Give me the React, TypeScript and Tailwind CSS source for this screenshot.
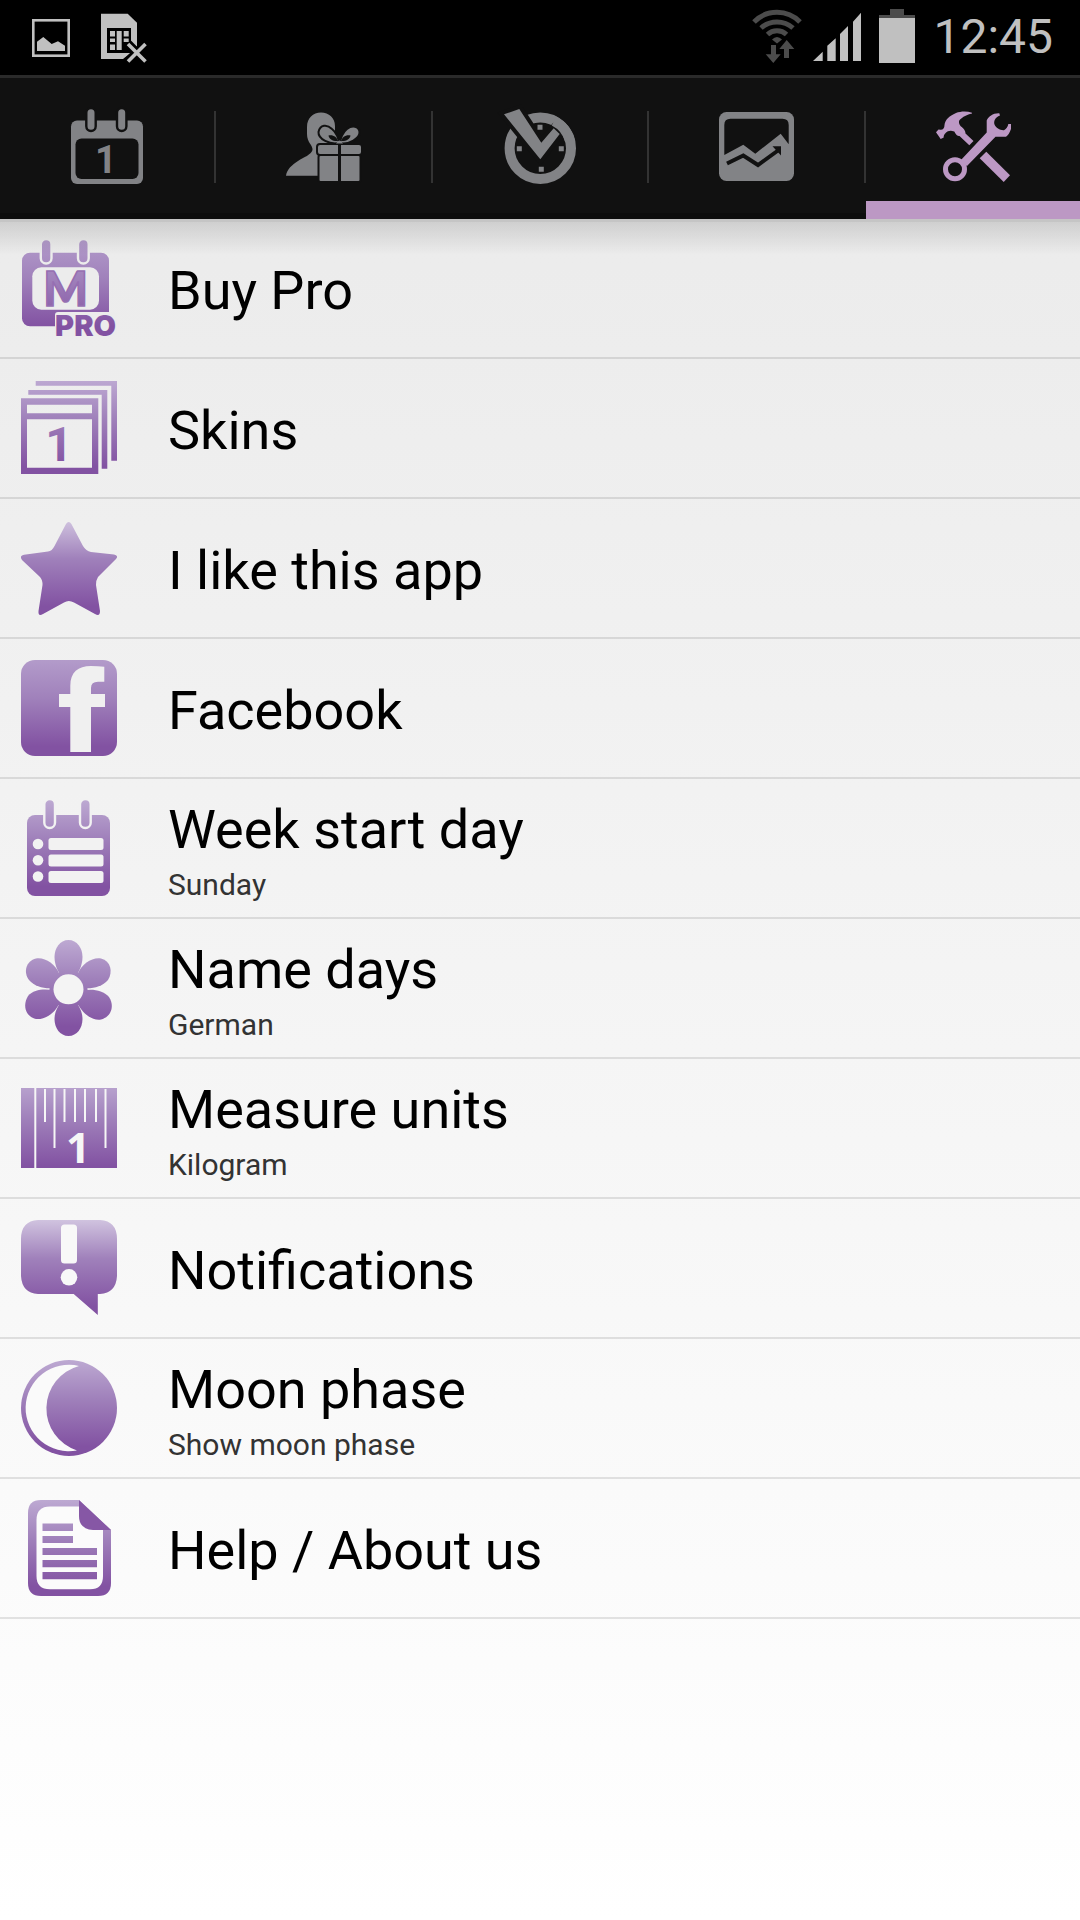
import React from 'react';

interface IconProps {
  children: React.ReactNode;
}

interface SettingsItem {
  title: string;
  summary?: string;
  icon: React.ReactNode;
  // the icon cut-outs use currentColor, so this follows the page background
  tone: string;
  // lightest colour of the icon gradient
  top?: string;
}

const TabIcon: React.FC<IconProps> = ({ children }) => (
  <svg viewBox="0 0 96 96" className="size-24" fill="currentColor" aria-hidden="true">
    {children}
  </svg>
);

const CalendarIcon = () => (
  <TabIcon>
    <rect x="12" y="21.5" width="72" height="63.5" rx="6" />
    <rect x="16.5" y="39.5" width="63" height="40.5" rx="6" fill="#111" />
    <g stroke="#111" strokeWidth="2.4">
      <rect x="27.3" y="9" width="9.4" height="23" rx="4.7" />
      <rect x="58" y="9" width="9.4" height="23" rx="4.7" />
    </g>
    <text x="47" y="74" fontSize="38" fontWeight="700" fontFamily="Roboto, sans-serif" textAnchor="middle">1</text>
  </TabIcon>
);

const GiftIcon = () => (
  <TabIcon>
    <path d="M10 76.7C11 70 16 66 22 62C28 58 35 56 36.5 51C37 46 31 44 31 35V28C31 19 37 13.5 45 13.5C53 13.5 59 19 59 27V50L43 60V76.7Z" />
    <g stroke="#111" strokeWidth="2">
      <path d="M63 44C54 46 42 40 42.5 33C44 25.5 51 25 56 30C60 33 63 40 63 44Z" />
      <path d="M64 44C73 46 84 39 83.5 33C83 27 76 26 71 30C67 33 64 40 64 44Z" />
      <rect x="41" y="45" width="45" height="11" rx="3" />
      <rect x="42.5" y="56" width="42" height="27" rx="2" />
    </g>
    <path d="M62 42C57 42.5 53 40 52.5 36.5C57 35.5 61 38 62 42Z" fill="#111" />
    <path d="M65 42C70 42.5 74 40 74.5 36.5C70 35.5 66 38 65 42Z" fill="#111" />
    <rect x="62" y="46" width="3" height="36" fill="#111" />
    <path d="M60 44.5Q63.5 38.5 67 44.5Z" />
  </TabIcon>
);

const ClockIcon = () => (
  <TabIcon>
    <circle cx="48.3" cy="49.3" r="30.7" fill="none" stroke="currentColor" strokeWidth="10" />
    <path d="M12 15.3L27.3 10L49.3 43.7L61.7 29.3L67.7 35L48.3 60.3Z" stroke="#111" strokeWidth="8" fill="#111" />
    <path d="M62 22A30.7 30.7 0 0 1 78 42" stroke="currentColor" strokeWidth="10" fill="none" />
    <path d="M12 15.3L27.3 10L49.3 43.7L61.7 29.3L67.7 35L48.3 60.3Z" />
    <path d="M45.5 25.8h5v5h-5zM24.8 47.2h5v5h-5zM66.8 47.2h5v5h-5zM46.8 67.8h5v5h-5z" />
  </TabIcon>
);

const ChartIcon = () => (
  <TabIcon>
    <rect x="11" y="13" width="75" height="69" rx="7.5" />
    <path d="M16.3 56V26Q16.3 19.7 22.5 19.7H74.5Q80.7 19.7 80.7 26V45.3L72.7 34.7L47.3 54.7L35.3 45.7Z" fill="#111" />
    <path d="M19 64.5L35.3 56.5L50 66L70 51.5" fill="none" stroke="#111" strokeWidth="4" />
    <path d="M64.5 47.3H73V56.5Z" fill="#111" />
  </TabIcon>
);

const ToolsIcon = () => (
  <TabIcon>
    <path d="M47 13.7C42 12 36 12 31 14C24 17 20 21 19.5 26C19.5 29 18 31 15.5 30.8L13.5 30.5L11 33.3L15.7 40L18.7 38.5C18.5 35 22 31.5 26 31.7L29.3 32.5C31 36 33 37.5 34.5 37L44.3 46.3L48.5 42L40.5 34.5C40.5 31 38 29 36 27.5C33 24 33.5 21 36.3 19.5C39 17 43 15.5 47 14.5Z" />
    <path d="M61.3 52.7L85 76.3L78.7 83L54.7 59.2Z" />
    <circle cx="30" cy="70.3" r="9.5" fill="none" stroke="currentColor" strokeWidth="5" />
    <path d="M35.5 61.5L61.7 33.5V21.5C63.5 17.5 68 14 74.3 14.3L75 16.5C70 18.5 68.5 22 69.5 25.5C71 29 75 31.5 79 31.2C81.5 30 83 27.5 83.3 25H86V30C84.5 34 83 36.5 81 37.7H70.5L42 67Z" />
  </TabIcon>
);

const SettingIcon: React.FC<IconProps & { id: string; tone: string; top?: string }> = ({
  id,
  tone,
  top = '#bda9d2',
  children
}) => (
  <svg viewBox="0 0 96 96" className={`size-24 shrink-0 overflow-visible ${tone}`} fill={`url(#${id})`} aria-hidden="true">
    <defs>
      <linearGradient id={id} gradientUnits="userSpaceOnUse" x1="0" y1="0" x2="0" y2="96">
        <stop offset="0" stopColor={top} />
        <stop offset="0.4" stopColor="#a081bb" />
        <stop offset="0.9" stopColor="#8252a2" />
      </linearGradient>
    </defs>
    {children}
  </svg>
);

const items: SettingsItem[] = [
  {
    title: 'Buy Pro',
    tone: 'text-[#ececec]',
    top: '#b39bca',
    icon: (
      <>
        <rect x="1" y="12.7" width="87" height="73.6" rx="8" />
        <rect x="11.3" y="27.3" width="66.7" height="42.4" rx="9" fill="currentColor" />
        <g stroke="currentColor" strokeWidth="2.4">
          <rect x="19.8" y="-1" width="10.7" height="24.5" rx="5.3" />
          <rect x="57" y="-1" width="10.7" height="24.5" rx="5.3" />
        </g>
        <text x="44.5" y="65.5" fontSize="47" fontWeight="900" fontFamily="Lato, sans-serif" textAnchor="middle" stroke="#966fb2" strokeWidth="1.6">M</text>
        <rect x="34" y="72" width="62" height="24" rx="3" fill="currentColor" />
        <text x="95" y="95.5" fontSize="29" fontWeight="900" fontFamily="Inter, sans-serif" textAnchor="end">PRO</text>
      </>
    )
  },
  {
    title: 'Skins',
    tone: 'text-[#ededed]',
    icon: (
      <>
        <path d="M14.7 1H96V80.7H90.3V5.7H14.7Z" />
        <path d="M7.3 10H86.3V88.7H80.7V14.7H7.3Z" />
        <path fillRule="evenodd" d="M0 18.3H77.3V94H0ZM6 24.7V33.3H71V24.7ZM6 39.3V87.7H71V39.3Z" />
        <text x="38" y="81" fontSize="48" fontWeight="700" fontFamily="Roboto, sans-serif" textAnchor="middle">1</text>
      </>
    )
  },
  {
    title: 'I like this app',
    tone: 'text-[#eeeeee]',
    top: '#d0c3df',
    icon: (
      <path d="M45 4Q47.7 0 50.4 4L62 26Q65 31 70 32L93 34.5Q98 35.5 95 39L77 57Q75 60 75 65L79 91Q79 97 74 94L53 82.5Q47.7 79.5 43 82.5L22 94Q17 97 17.5 91L21.5 65Q21.7 60 19 57L1 40Q-2 35.5 3 34.7L27 31.5Q31 31 33.5 26Z" />
    )
  },
  {
    title: 'Facebook',
    tone: 'text-[#f0f0f0]',
    top: '#b39bca',
    icon: (
      <>
        <rect width="96" height="96" rx="14" />
        <path fill="currentColor" d="M49.3 92V47H38V34H49.3V26C49.3 12 57 6 70 6Q77 6 83.3 6.7V21.7H77Q70 21.7 70 28V34H84V47H70V92Z" />
      </>
    )
  },
  {
    title: 'Week start day',
    summary: 'Sunday',
    tone: 'text-[#f2f2f2]',
    icon: (
      <>
        <rect x="6" y="15" width="83" height="81" rx="8" />
        <g stroke="currentColor" strokeWidth="2.4">
          <rect x="23.3" y="-1" width="10.7" height="29" rx="5.3" />
          <rect x="59" y="-1" width="10.7" height="29" rx="5.3" />
        </g>
        <g fill="currentColor">
          <circle cx="17" cy="44" r="5.3" />
          <circle cx="17" cy="60.3" r="5.3" />
          <circle cx="17" cy="76.5" r="5.3" />
          <rect x="27.5" y="38" width="55" height="12" rx="2.5" />
          <rect x="27.5" y="54.5" width="55" height="12" rx="2.5" />
          <rect x="27.5" y="71" width="55" height="12" rx="2.5" />
        </g>
      </>
    )
  },
  {
    title: 'Name days',
    summary: 'German',
    tone: 'text-[#f4f4f4]',
    icon: (
      <>
        <path d="M47.5 0C56 0 61.5 8 61.5 17C61.5 26 57 33 55 36H40C38 33 33.5 26 33.5 17C33.5 8 39 0 47.5 0Z" />
        <path d="M47.5 96C56 96 61.5 88 61.5 79C61.5 72 58 66 55 62H40C37 66 33.5 72 33.5 79C33.5 88 39 96 47.5 96Z" />
        <path d="M38 33C34 24 24 17 15 18.5C5 21 2 32 8 40C14 47 24 49 33 48L40 40Z" />
        <path d="M57 33C61 24 71 17 80 18.5C90 21 92 32 87 40C81 47 71 49 62 48L55 40Z" />
        <path d="M38 64C34 73 24 80 15 79C5 77 1 66 7 56C13 49 24 48.5 33 50.5L40 58Z" />
        <path d="M57 64C61 73 71 81 80 79.5C90 77 94 66 88 57C82 50 71 48.5 62 50.5L55 58Z" />
        <circle cx="47.5" cy="49.3" r="19" />
        <circle cx="47.5" cy="49.3" r="15" fill="currentColor" />
      </>
    )
  },
  {
    title: 'Measure units',
    summary: 'Kilogram',
    tone: 'text-[#f6f6f6]',
    icon: (
      <>
        <rect y="8" width="96" height="80" />
        <path
          stroke="currentColor"
          strokeWidth="2"
          d="M14.3 8V88M24 9V42M33.5 9V68M43.5 9V42M54 9V42M64 9V42M75 9V42M84.5 9V68"
        />
        <text x="57" y="83" fontSize="42" fontWeight="700" fontFamily="Open Sans, sans-serif" textAnchor="middle" fill="currentColor">1</text>
      </>
    )
  },
  {
    title: 'Notifications',
    tone: 'text-[#f8f8f8]',
    top: '#d0c3df',
    icon: (
      <>
        <path d="M17 0H79Q96 1 96 19V56Q95 73 79 74H76.8V95L52.7 74H17Q1 73 0 56V19Q0 1 17 0Z" />
        <rect x="40" y="4.5" width="16" height="39" rx="3.5" fill="currentColor" />
        <circle cx="48" cy="57.3" r="8.3" fill="currentColor" />
      </>
    )
  },
  {
    title: 'Moon phase',
    summary: 'Show moon phase',
    tone: 'text-[#fafafa]',
    icon: (
      <>
        <circle cx="48" cy="48" r="48" />
        <path d="M58 6A43.2 43.2 0 1 0 56 90.4A44 44 0 0 1 58 6Z" fill="currentColor" />
      </>
    )
  },
  {
    title: 'Help / About us',
    tone: 'text-[#fbfbfb]',
    icon: (
      <>
        <path d="M20 0H58L90 30V83Q90 96 77 96H20Q7 96 7 83V13Q7 0 20 0Z" />
        <path d="M29 6.5H58L82 30V76Q82 89.3 69 89.3H29Q15.5 89.3 15.5 76V20Q15.5 6.5 29 6.5Z" fill="currentColor" />
        <path d="M58 0L90 30H72Q58 29 58 16Z" fill="#8657a5" />
        <path d="M21.5 23.5H52V31H21.5ZM21.5 36H52V43H21.5ZM21.5 48H76V55H21.5ZM21.5 60H76V67.3H21.5ZM21.5 72H76V79.3H21.5Z" />
      </>
    )
  }
];

const tabs = [
  { name: 'Calendar', icon: <CalendarIcon /> },
  { name: 'Birthdays', icon: <GiftIcon /> },
  { name: 'Reminders', icon: <ClockIcon /> },
  { name: 'Charts', icon: <ChartIcon /> },
  { name: 'Settings', icon: <ToolsIcon /> }
];

const StatusBar = () => (
  <div className="flex h-[75px] items-center justify-between bg-black pl-8 pr-[27px] text-[#c0c0c0]">
    <div className="flex gap-[31px] pb-0.5">
      <svg width="38" height="56" viewBox="0 0 38 56" fill="currentColor" aria-hidden="true">
        <rect x="1.3" y="11.3" width="35.4" height="35.4" fill="none" stroke="currentColor" strokeWidth="2.6" />
        <path d="M5 32.7L11.3 28L19.7 35L26 32.3L33 36.7V42H5Z" />
      </svg>
      <svg width="47" height="56" viewBox="0 0 47 56" fill="currentColor" aria-hidden="true">
        <path d="M0 4.7H26.7L36 13.7V39L22 50H0Z" />
        <rect x="6" y="19" width="24" height="25" fill="#000" />
        <path d="M9 22h5v5.5h-5zM9 29.5h5v3.5h-5zM9 35.5h5v5.5h-5zM15.7 22h5v19h-5zM22.7 22h5v5.5h-5zM22.7 29.5h5v3.5h-5z" />
        <path d="M27 35L44.5 52.5M44.5 35L27 52.5" stroke="#000" strokeWidth="9" />
        <path d="M27 35L44.5 52.5M44.5 35L27 52.5" stroke="currentColor" strokeWidth="3.6" />
      </svg>
    </div>
    <div className="flex items-center pb-0.5">
      <svg width="50" height="56" viewBox="0 0 50 56" fill="#4c4c4c" className="mr-[11px]" aria-hidden="true">
        <g fill="none" stroke="#4c4c4c" strokeWidth="5">
          <path d="M2 13A32 32 0 0 1 48 13" />
          <path d="M9 19A24 24 0 0 1 41 19" />
          <path d="M15.5 25.5A14 14 0 0 1 34.5 25.5" />
        </g>
        <path d="M20 30.5Q25 25.5 30 30.5L25 34.5Z" />
        <path d="M19 36H24V45.3H28.7L21.3 54L13.7 45.3H19Z" />
        <path d="M34.7 31L42.3 40H37V49H32V40H27.3Z" />
      </svg>
      <svg width="48" height="56" viewBox="0 0 48 56" fill="currentColor" className="mr-[18px]" aria-hidden="true">
        <path d="M0 52L9.7 42.7V52ZM14.3 52V36.7L22.7 29.3V52ZM27 52V25L35 17V52ZM40 52V12.7L48 3.7V52Z" />
      </svg>
      <svg width="36" height="56" viewBox="0 0 36 56" className="mr-[18px]" aria-hidden="true">
        <path d="M11 0H25V6H36V9H0V6H11Z" fill="#4c4c4c" />
        <rect y="9" width="36" height="45" fill="currentColor" />
      </svg>
      <time className="text-5xl">12:45</time>
    </div>
  </div>
);

const App: React.FC = () => {
  return (
    <div className="flex min-h-screen flex-col bg-linear-to-b from-[#e9e9e9] to-white font-[Roboto,sans-serif]">
      <header>
        <StatusBar />

        {/* Tabs */}
        <nav className="flex border-t-3 border-[#2a2a2a] bg-[#111] shadow-[inset_0_-6px_0_#0d0d0d]">
          {tabs.map((tab, index) => {
            const active = index === tabs.length - 1;
            return (
              <button
                key={tab.name}
                type="button"
                aria-label={tab.name}
                aria-current={active ? 'page' : undefined}
                className={`relative flex h-[141px] flex-1 items-center justify-center pb-1 ${
                  active ? 'text-[#bc98c4]' : 'pr-0.5 text-[#828386]'
                }`}
              >
                {tab.icon}
                {active ? (
                  <span className="absolute inset-x-0 bottom-0 h-[18px] bg-[#bc98c4]" />
                ) : (
                  <span className="absolute right-0 top-[33px] h-[72px] w-0.5 bg-[#333]" />
                )}
              </button>
            );
          })}
        </nav>
      </header>

      {/* Settings list */}
      <main className="relative grow">
        {/* Shadow under the tabs */}
        <div className="pointer-events-none absolute inset-x-0 top-0 h-9 border-t-3 border-[#c5c5c5] bg-linear-to-b from-black/12 to-transparent" />
        <ul>
          {items.map((item, index) => (
            <li key={item.title} className="border-b-2 border-black/10">
              <button type="button" className="flex h-[138px] w-full items-center gap-[51px] px-[21px] text-left">
                <SettingIcon id={`icon-fill-${index}`} tone={item.tone} top={item.top}>
                  {item.icon}
                </SettingIcon>
                <span className="flex flex-col pt-1.5">
                  <span className="text-[54px] leading-[68px] text-black">{item.title}</span>
                  {item.summary && (
                    <span className="text-3xl leading-[42px] text-[#333]">{item.summary}</span>
                  )}
                </span>
              </button>
            </li>
          ))}
        </ul>
      </main>
    </div>
  );
};

export default App;
